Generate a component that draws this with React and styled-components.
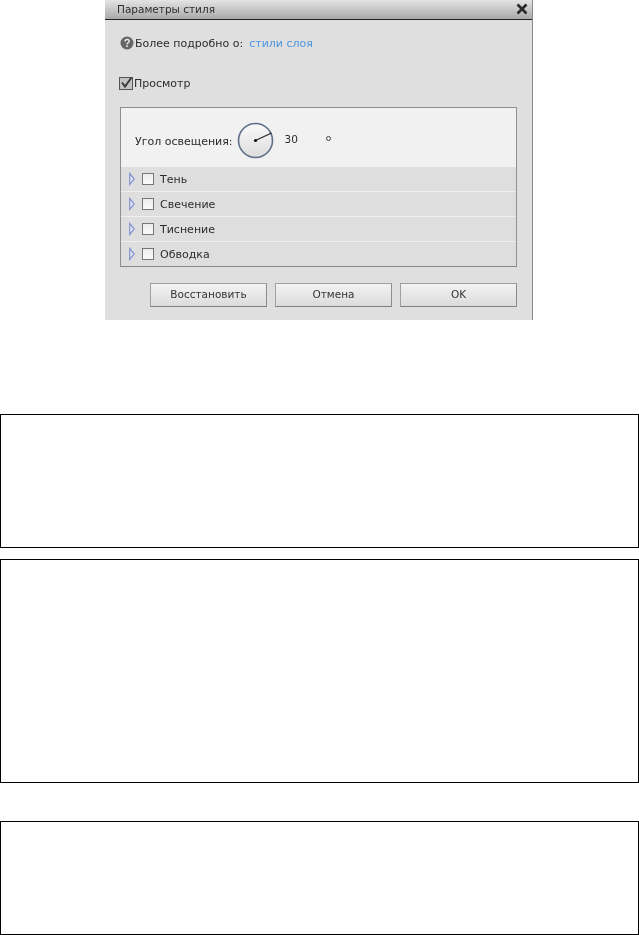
import React from "react";
import styled, { createGlobalStyle } from "styled-components";

const Global = createGlobalStyle`
  html, body { margin: 0; padding: 0; background: #fff; }
  body { font-family: "DejaVu Sans", sans-serif; overflow: hidden; }
`;
const Page = styled.div`
  width: 639px; height: 935px; display: flex; flex-direction: column; overflow: hidden;
`;
const Dialog = styled.div`
  width: 428px; height: 320px; margin-left: 105px; box-sizing: border-box;
  background: #dfdfdf; border-right: 1px solid #8a8a8a; flex: none;
  display: flex; flex-direction: column; color: #2c2c2c; font-size: 11px;
  filter: blur(0.35px);
`;
const Title = styled.div`
  height: 20px; box-sizing: border-box; flex: none; border-bottom: 1px solid #222;
  background: linear-gradient(#e4e4e4, #a9a9a9); font-size: 10.5px;
  display: flex; align-items: center; justify-content: space-between;
  padding: 0 4px 2px 12px; color: #2e2e2e;
`;
const Body = styled.div`
  flex: 1; display: flex; flex-direction: column; padding: 0 16px 13px 15px;
`;
const InfoRow = styled.div`
  display: flex; align-items: center; gap: 1px; height: 16px; margin-top: 15px;
`;
const Link = styled.span` color: #4b96e0; margin-left: 5px; `;
const PreviewRow = styled.div`
  display: flex; align-items: center; gap: 1px; height: 16px; margin-top: 24px; margin-left: -1px;
`;
const Panel = styled.div`
  margin-top: 16px; height: 160px; box-sizing: border-box; flex: none; width: 397px;
  border: 1px solid #8f8f8f; border-bottom-color: #858585;
  display: flex; flex-direction: column; background: #dedede;
`;
const AngleRow = styled.div`
  height: 59px; flex: none; background: #f1f1f1; display: flex; align-items: center;
  padding: 6px 0 0 14px; box-sizing: border-box;
`;
const AngleLabel = styled.span` margin-right: 4px; margin-top: 2px; `;
const AngleValue = styled.span` margin-left: 11px; width: 41px; font-size: 10.5px; margin-top: -3px; `;
const Degree = styled.span`
  width: 5px; height: 5px; border: 1.4px solid #444; border-radius: 50%; box-sizing: border-box; margin-top: -5px;
`;
const Row = styled.div`
  flex: 1; display: flex; align-items: center; padding: 1px 0 0 8px; box-sizing: border-box;
  border-top: ${p => (p.$first ? "0" : "1px solid #f0f0f0")};
`;
const Tri = styled.svg` flex: none; margin: -2px 7px 0 0; `;
const Box = styled.span`
  flex: none; width: 12px; height: 12px; box-sizing: border-box; border: 1px solid #777;
  background: linear-gradient(#ececec, #fafafa); margin: -2px 6px 0 0;
`;
const Buttons = styled.div`
  display: flex; gap: 8px; margin-top: 16px; margin-left: 30px; margin-right: -1px;
`;
const Button = styled.button`
  width: 117px; height: 24px; padding: 0 0 2px; font: inherit; font-size: 10.5px; color: #333; box-sizing: border-box;
  border: 1px solid #a0a0a0; border-bottom-color: #808080; border-right-color: #8c8c8c;
  background: linear-gradient(#f2f2f2, #dcdcdc);
`;
const Frame = styled.div`
  box-sizing: border-box; flex: none; width: 639px; height: ${p => p.$h}px; margin-top: ${p => p.$top}px;
  border: 1px solid #000;
`;

const Rows = ["Тень", "Свечение", "Тиснение", "Обводка"];

export default function App() {
  return (
    <Page>
      <Global />
      <Dialog>
        <Title>
          <span>Параметры стиля</span>
          <svg width="12" height="12" viewBox="0 0 12 12">
            <path d="M1.5 1.5 10.5 10.5M10.5 1.5 1.5 10.5" stroke="#2a2a2a" strokeWidth="2.6" />
          </svg>
        </Title>
        <Body>
          <InfoRow>
            <svg width="14" height="14" viewBox="0 0 14 14">
              <circle cx="7" cy="7" r="6.5" fill="#666" />
              <path d="M5 5.4C5 2.8 9.2 3 9.2 5.3 9.2 6.8 7 6.8 7 8.4" fill="none" stroke="#eee" strokeWidth="1.4" />
              <rect x="6.2" y="9.4" width="1.6" height="1.6" fill="#eee" />
            </svg>
            <span>Более подробно о:</span>
            <Link>стили слоя</Link>
          </InfoRow>
          <PreviewRow>
            <svg width="14" height="14" viewBox="0 0 14 14">
              <rect x="0.5" y="1.5" width="13" height="12" fill="#c4c4c4" stroke="#555" />
              <path d="M3 6.5 6 10.5 12.5 1.5" fill="none" stroke="#3a3a3a" strokeWidth="2" />
            </svg>
            <span>Просмотр</span>
          </PreviewRow>
          <Panel>
            <AngleRow>
              <AngleLabel>Угол освещения:</AngleLabel>
              <svg width="37" height="37" viewBox="0 0 37 37">
                <defs>
                  <linearGradient id="dial" x1="0" y1="0" x2="0" y2="1">
                    <stop offset="0" stopColor="#fafafa" />
                    <stop offset="1" stopColor="#dcdcdc" />
                  </linearGradient>
                </defs>
                <circle cx="18.5" cy="18.5" r="17" fill="url(#dial)" stroke="#5f6f8a" strokeWidth="1.6" />
                <path d="M18.5 18.5 34.5 11" stroke="#222" strokeWidth="1.1" />
                <circle cx="18.5" cy="18.5" r="1.6" fill="#111" />
              </svg>
              <AngleValue>30</AngleValue>
              <Degree />
            </AngleRow>
            {Rows.map((r, i) => (
              <Row key={r} $first={i === 0}>
                <Tri width="6" height="14" viewBox="0 0 6 14">
                  <path d="M.7 1.5 5.3 7 .7 12.5Z" fill="#dfe3f2" stroke="#8794cf" strokeWidth="1.2" />
                </Tri>
                <Box />
                <span>{r}</span>
              </Row>
            ))}
          </Panel>
          <Buttons>
            <Button>Восстановить</Button>
            <Button>Отмена</Button>
            <Button>OK</Button>
          </Buttons>
        </Body>
      </Dialog>
      <Frame $top={94} $h={134} />
      <Frame $top={11} $h={224} />
      <Frame $top={38} $h={114} />
    </Page>
  );
}
